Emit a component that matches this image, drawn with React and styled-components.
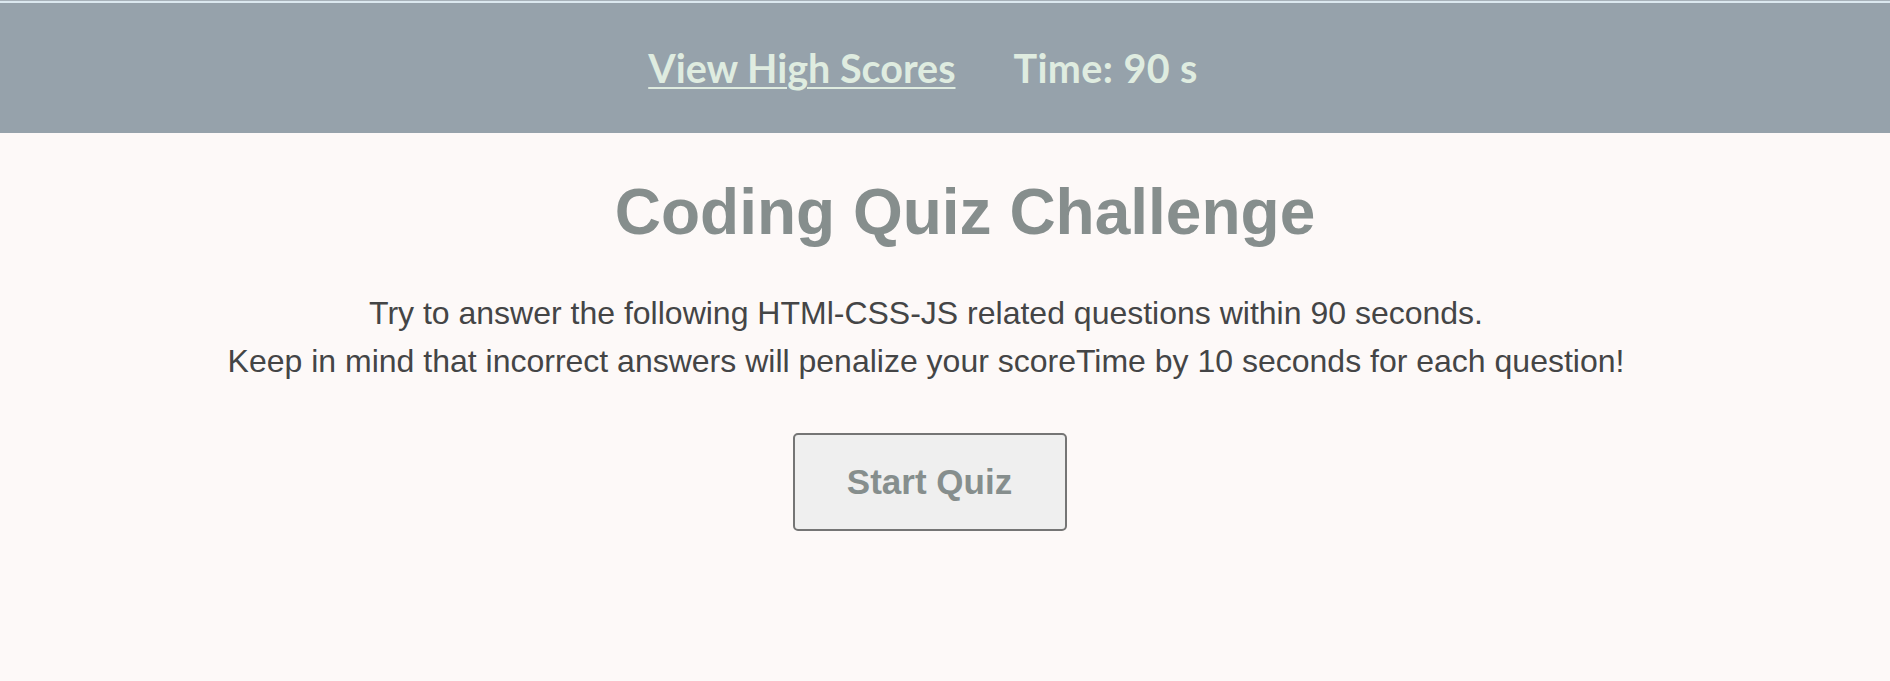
import React from "react";
import styled, { createGlobalStyle } from "styled-components";

const GlobalStyle = createGlobalStyle`
  html, body {
    margin: 0;
    padding: 0;
    background: #fdf9f8;
  }
  body {
    font-family: "Liberation Sans", Arial, sans-serif;
  }
`;

const Header = styled.header`
  height: 133px;
  display: flex;
  align-items: center;
  justify-content: center;
  gap: 58px;
  padding-top: 2px;
  padding-right: 44px;
  box-sizing: border-box;
  background: linear-gradient(
    to bottom,
    #a7b1b9 0 1px,
    #dbe8ef 1px 3px,
    #96a2ab 3px
  );
  font-family: Lato, "Open Sans", sans-serif;
  font-weight: 700;
  font-size: 39.5px;
  color: #dfece0;
`;

const HeaderLink = styled.a`
  color: inherit;
  text-decoration: underline;
  text-underline-offset: 4px;
  text-decoration-thickness: 2px;
  cursor: pointer;
`;

const Timer = styled.span`
  color: inherit;
  letter-spacing: 0.4px;
`;

const Main = styled.main`
  display: flex;
  flex-direction: column;
  align-items: center;
  text-align: center;
  padding-right: 38px;
`;

const Title = styled.h1`
  margin: 44px 0 42px;
  padding-left: 78px;
  font-size: 64px;
  font-weight: 700;
  line-height: 1.1;
  color: #868e8d;
`;

const Intro = styled.p`
  margin: 0;
  font-size: 32px;
  line-height: 48px;
  color: #444546;
`;

const StartButton = styled.button`
  margin: 48px 0 0 7px;
  width: 274px;
  height: 98px;
  background: #efefef;
  border: 2px solid #757575;
  border-radius: 5px;
  font-family: "Liberation Sans", Arial, sans-serif;
  font-size: 35px;
  font-weight: 700;
  color: #868e8d;
  cursor: pointer;
`;

export default function App() {
  return (
    <>
      <GlobalStyle />
      <Header>
        <HeaderLink>View High Scores</HeaderLink>
        <Timer>Time: 90 s</Timer>
      </Header>
      <Main>
        <Title>Coding Quiz Challenge</Title>
        <Intro>
          Try to answer the following HTMl-CSS-JS related questions within 90 seconds.
          <br />
          Keep in mind that incorrect answers will penalize your scoreTime by 10 seconds for each question!
        </Intro>
        <StartButton>Start Quiz</StartButton>
      </Main>
    </>
  );
}
